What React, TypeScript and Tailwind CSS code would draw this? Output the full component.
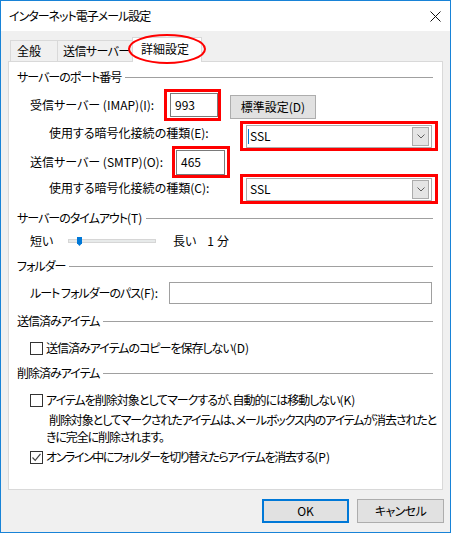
import React from 'react';

const font = "font-['Noto_Sans_CJK_JP','Noto_Sans',sans-serif] [font-feature-settings:'palt']";

// kana-heavy labels are narrower in the original UI font, so tighten the
// Japanese part and leave the (X) accelerator suffix alone
const Label: React.FC<{ text: string; track: string }> = ({ text, track }) => {
  const i = text.lastIndexOf('(');
  const head = i > 0 ? text.slice(0, i) : text;
  const tail = i > 0 ? text.slice(i) : '';
  return (
    <>
      <span className={track}>{head}</span>
      {tail}
    </>
  );
};

const GroupHeader: React.FC<{ label: string; className?: string }> = ({ label, className }) => (
  <div className={`flex items-center h-[16px] pl-[8px] pr-[9px] ${className ?? ''}`}>
    <span className="whitespace-nowrap">
      <Label text={label} track="tracking-[-1px]" />
    </span>
    <div className="flex-1 h-px bg-[#a0a0a0] ml-[4px]" />
  </div>
);

const TextBox: React.FC<{ value?: string; className?: string }> = ({ value, className }) => (
  <div className={`bg-white border border-[#7a7a7a] flex items-center pl-[4px] ${className ?? ''}`}>
    {value}
  </div>
);

const Combo: React.FC<{ value: string; caret?: boolean }> = ({ value, caret }) => (
  <div className="relative w-full h-[23px] bg-white border border-[#acacac] flex items-center">
    {caret && <div className="absolute left-[1px] top-[3px] w-px h-[15px] bg-[#0078d7]" />}
    <span className="pl-[3px] flex-1">{value}</span>
    <div className="mr-[2px] w-[17px] h-[19px] bg-[#e5e5e5] border border-[#acacac] flex items-center justify-center">
      <svg width="8" height="5" viewBox="0 0 8 5">
        <path d="M0.5 0.5 L4 4 L7.5 0.5" fill="none" stroke="#606060" strokeWidth="1" />
      </svg>
    </div>
  </div>
);

const RedBox: React.FC<{ className?: string; children: React.ReactNode }> = ({ className, children }) => (
  <div className={`border-[3px] border-[#ff0000] flex items-center shrink-0 ${className ?? ''}`}>{children}</div>
);

const CheckBox: React.FC<{ checked?: boolean }> = ({ checked }) => (
  <div className="w-[13px] h-[13px] bg-white border border-[#333333] shrink-0 flex items-center justify-center">
    {checked && (
      <svg width="11" height="11" viewBox="0 0 11 11">
        <path d="M1.5 5.5 L4.2 8.3 L9.5 1.8" fill="none" stroke="#444444" strokeWidth="1.2" />
      </svg>
    )}
  </div>
);

const CheckRow: React.FC<{ label: string; checked?: boolean; className?: string; track?: string }> = ({ label, checked, className, track }) => (
  <div className={`flex items-center h-[16px] pl-[21px] ${className ?? ''}`}>
    <CheckBox checked={checked} />
    <span className="ml-[3px] whitespace-nowrap">
      <Label text={label} track={track ?? 'tracking-[-1px]'} />
    </span>
  </div>
);

export default function App() {
  return (
    <div className={`w-[451px] h-[533px] border border-[#1883d7] bg-[#f0f0f0] flex flex-col text-[12px] text-black leading-[16px] ${font}`}>
      {/* title bar */}
      <div className="h-[30px] bg-white flex items-center justify-between pl-[8px] pr-[9px] shrink-0">
        <span className="tracking-[-1px]">インターネット電子メール設定</span>
        <svg width="11" height="11" viewBox="0 0 11 11">
          <path d="M0.5 0.5 L10.5 10.5 M10.5 0.5 L0.5 10.5" stroke="#111111" strokeWidth="1" />
        </svg>
      </div>

      {/* tabs */}
      <div className="relative h-[30px] pl-[9px] flex items-end shrink-0">
        <div className="h-[21px] w-[48px] border border-b-0 border-[#d9d9d9] bg-[#f0f0f0] flex items-center pl-[6px]">全般</div>
        <div className="h-[21px] w-[77px] -ml-px border border-b-0 border-[#d9d9d9] bg-[#f0f0f0] flex items-center pl-[5px] whitespace-nowrap overflow-hidden tracking-[-0.6px]">送信サーバー</div>
        <div className="relative z-10 -mb-px -ml-[2px] h-[25px] w-[70px] border border-b-0 border-[#d9d9d9] bg-white flex items-center pl-[8px] pb-[2px]">詳細設定</div>
        <svg className="absolute z-20 left-[125px] top-[2px]" width="82" height="32" viewBox="0 0 82 32">
          <ellipse cx="41" cy="16" rx="38" ry="14" fill="none" stroke="#ff0000" strokeWidth="2" />
        </svg>
      </div>

      {/* panel */}
      <div className="mx-[7px] h-[429px] bg-white border border-[#d9d9d9] flex flex-col shrink-0">
        <GroupHeader label="サーバーのポート番号" className="mt-[7px]" />

        <div className="flex items-center h-[32px] mt-[4px]">
          <span className="w-[155px] pl-[21px] shrink-0 whitespace-nowrap">受信サーバー (IMAP)(I):</span>
          <RedBox className="w-[57px] h-[32px] pl-[3px]">
            <TextBox value="993" className="w-[48px] h-[24px]" />
          </RedBox>
          <button className="self-end mb-[2px] ml-[9px] w-[86px] h-[24px] bg-[#e1e1e1] border border-[#adadad] flex items-center justify-center">
            標準設定(D)
          </button>
        </div>

        <div className="flex h-[30px]">
          <span className="w-[231px] pl-[40px] mt-[4px] shrink-0 whitespace-nowrap">使用する暗号化接続の種類(E):</span>
          <RedBox className="w-[198px] h-[30px] px-[3px]">
            <Combo value="SSL" caret />
          </RedBox>
        </div>

        <div className="flex items-center h-[32px] -mt-[5px]">
          <span className="w-[163px] pl-[21px] shrink-0 whitespace-nowrap">送信サーバー (SMTP)(O):</span>
          <RedBox className="w-[58px] h-[32px] pl-[1px]">
            <TextBox value="465" className="w-[49px] h-[25px]" />
          </RedBox>
        </div>

        <div className="flex h-[30px] -mt-[4px]">
          <span className="w-[231px] pl-[40px] mt-[6px] shrink-0 whitespace-nowrap">使用する暗号化接続の種類(C):</span>
          <RedBox className="w-[198px] h-[30px] px-[3px]">
            <Combo value="SSL" />
          </RedBox>
        </div>

        <GroupHeader label="サーバーのタイムアウト(T)" className="mt-[6px]" />

        <div className="flex items-center h-[16px] mt-[7px]">
          <span className="w-[59px] pl-[21px] shrink-0">短い</span>
          <div className="relative w-[88px] h-[4px] bg-[#e7eaea] border border-[#d6d6d6]">
            <div className="absolute left-[8px] -top-[3px] w-[5px] h-[9px] bg-[#0078d7] [clip-path:polygon(0_0,100%_0,100%_70%,50%_100%,0_70%)]" />
          </div>
          <span className="ml-[17px]">長い</span>
          <span className="ml-[11px]">1</span>
          <span className="ml-[3px]">分</span>
        </div>

        <GroupHeader label="フォルダー" className="mt-[9px]" />

        <div className="flex items-center h-[22px] mt-[8px]">
          <span className="w-[160px] pl-[21px] shrink-0 whitespace-nowrap">
            <Label text="ルート フォルダーのパス(F):" track="tracking-[-1px]" />
          </span>
          <div className="w-[263px] h-[22px] bg-white border border-[#a0a0a0]" />
        </div>

        <GroupHeader label="送信済みアイテム" className="mt-[9px]" />
        <CheckRow label="送信済みアイテムのコピーを保存しない(D)" className="mt-[11px]" />

        <GroupHeader label="削除済みアイテム" className="mt-[9px]" />
        <CheckRow label="アイテムを削除対象としてマークするが、自動的には移動しない(K)" className="mt-[11px]" />
        <p className="pl-[40px] mt-[3px] leading-[17px] whitespace-nowrap tracking-[-1.1px]">
          削除対象としてマークされたアイテムは、メールボックス内のアイテムが消去されたと
          <br />
          <span className="-ml-[3px]">きに完全に削除されます。</span>
        </p>
        <CheckRow label="オンライン中にフォルダーを切り替えたらアイテムを消去する(P)" checked className="mt-[4px]" track="tracking-[-1.4px]" />
      </div>

      {/* footer */}
      <div className="flex justify-end gap-[8px] mt-[9px] pr-[6px]">
        <button className="w-[87px] h-[24px] bg-[#e1e1e1] border-2 border-[#0078d7] flex items-center justify-center">OK</button>
        <button className="w-[87px] h-[24px] bg-[#e1e1e1] border border-[#adadad] flex items-center justify-center tracking-[-0.6px]">キャンセル</button>
      </div>
    </div>
  );
}
